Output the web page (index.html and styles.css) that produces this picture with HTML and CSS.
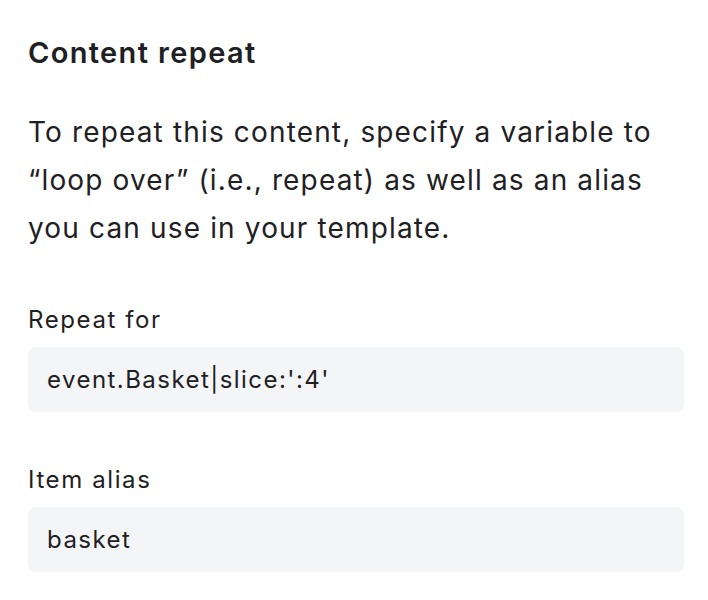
FILE: index.html
```html
<!DOCTYPE html>
<html>
<head>
<meta charset="utf-8">
<link rel="stylesheet" href="styles.css">
</head>
<body>
<div class="panel">
  <h2 class="title">Content repeat</h2>
  <p class="desc">To repeat this content, specify a variable to “loop over” (i.e., repeat) as well as an alias you can use in your template.</p>
  <div class="field">
    <label class="label">Repeat for</label>
    <div class="input">event.Basket|slice:':4'</div>
  </div>
  <div class="field">
    <label class="label">Item alias</label>
    <div class="input">basket</div>
  </div>
</div>
</body>
</html>
```
FILE: styles.css
```css
html, body {
  margin: 0;
  padding: 0;
  background: #ffffff;
}
body {
  font-family: Inter, "Noto Sans", sans-serif;
  color: #1f2023;
}
.panel {
  padding: 33px 24px 0 28px;
  width: 656px;
}
.title {
  margin: 0;
  font-size: 29px;
  line-height: 40px;
  font-weight: 600;
  letter-spacing: 1.35px;
}
.desc {
  margin: 35px 0 0;
  font-size: 28px;
  line-height: 48px;
  letter-spacing: 1.15px;
}
.field {
  display: flex;
  flex-direction: column;
  gap: 11px;
  margin-top: 52px;
}
.field + .field {
  margin-top: 52px;
}
.label {
  font-size: 24px;
  line-height: 32px;
  letter-spacing: 1.6px;
}
.input {
  height: 65px;
  box-sizing: border-box;
  background: #f4f5f7;
  border-radius: 8px;
  padding: 0 19px;
  display: flex;
  align-items: center;
  font-size: 24px;
  letter-spacing: 1.45px;
}
```
